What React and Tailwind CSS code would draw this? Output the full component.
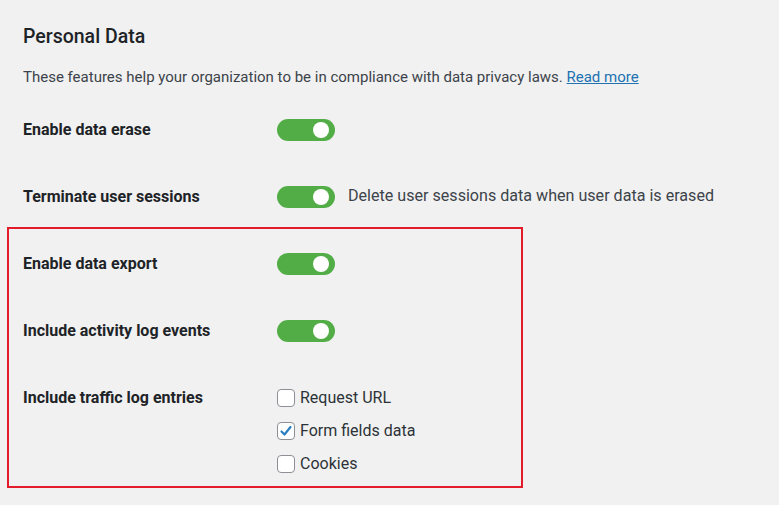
import React from 'react'

const font = { fontFamily: 'Roboto, "Noto Sans", sans-serif' }

function Toggle() {
  return (
    <span className="relative inline-block w-[58px] h-[22px] rounded-full bg-[#52ad47] shrink-0">
      <span className="absolute right-[6px] top-[3px] w-4 h-4 rounded-full bg-white" />
    </span>
  )
}

function Checkbox({ checked, label }) {
  return (
    <label className="h-[33px] flex items-center gap-[5px] text-[16px] text-[#2c3338]">
      <span className="w-[18px] h-[18px] rounded-[4px] border border-[#8c8f94] bg-white flex items-center justify-center">
        {checked && (
          <svg width="14" height="14" viewBox="0 0 14 14">
            <path d="M2.5 7.5 L5.5 10.5 L11.5 3" fill="none" stroke="#2a7fc0" strokeWidth="2.2" strokeLinecap="round" strokeLinejoin="round" />
          </svg>
        )}
      </span>
      {label}
    </label>
  )
}

function Row({ label, children, className = 'h-[67px]' }) {
  return (
    <div className={`flex items-center ${className}`}>
      <div className="w-[254px] font-bold text-[16px] text-[#1d2327]">{label}</div>
      {children}
    </div>
  )
}

export default function App() {
  return (
    <div className="w-[779px] h-[505px] bg-[#f1f1f1] overflow-hidden" style={font}>
      <div className="pl-[23px] pt-[24px]">
        <h2 className="text-[19.5px] leading-[26px] font-medium text-[#1d2327]">Personal Data</h2>
        <p className="mt-[17px] text-[15px] leading-5 text-[#3c434a]">
          These features help your organization to be in compliance with data privacy laws.{' '}
          <a href="#" className="text-[#2271b1] underline">Read more</a>
        </p>
        <div className="mt-[9px]">
          <Row label="Enable data erase"><Toggle /></Row>
          <Row label="Terminate user sessions" className="h-[64px] pt-[3px]">
            <Toggle />
            <span className="ml-[13px] text-[16.1px] text-[#3c434a]">Delete user sessions data when user data is erased</span>
          </Row>
        </div>
      </div>
      <div className="ml-[7px] w-[516px] border-2 border-[#e31c2b] pl-[14px] pb-[6px]">
        <Row label="Enable data export" className="h-[67px] pt-[3px]"><Toggle /></Row>
        <Row label="Include activity log events" className="h-[67px] pt-[2px]"><Toggle /></Row>
        <div className="flex items-start pt-[18px]">
          <div className="w-[254px] mt-[7px] leading-5 font-bold text-[16px] text-[#1d2327]">Include traffic log entries</div>
          <div className="flex flex-col">
            <Checkbox label="Request URL" />
            <Checkbox checked label="Form fields data" />
            <Checkbox label="Cookies" />
          </div>
        </div>
      </div>
    </div>
  )
}
